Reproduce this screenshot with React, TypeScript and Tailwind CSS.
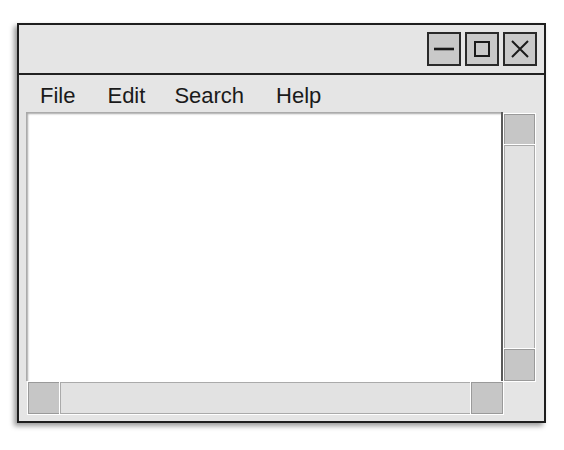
import React from 'react';

function TitleButton({ children }: { children: React.ReactNode }) {
  return (
    <div className="w-[34px] h-[34px] border-2 border-[#2a2a2a] bg-[#c9c9c9] flex items-center justify-center">
      {children}
    </div>
  );
}

function ScrollButton() {
  return <div className="w-full h-full bg-[#c6c6c6] border border-[#9a9a9a] outline outline-1 outline-white" />;
}

export default function App() {
  const menu = [
    { label: 'File', cls: 'ml-[21px]' },
    { label: 'Edit', cls: 'ml-[32px]' },
    { label: 'Search', cls: 'ml-[29px]' },
    { label: 'Help', cls: 'ml-[32px]' },
  ];

  return (
    <div className="w-[564px] h-[450px] bg-white pt-[23px] pl-[17px]" style={{ fontFamily: '"Liberation Sans", Arial, sans-serif' }}>
      <div className="w-[529px] h-[400px] border-2 border-[#1e1e1e] bg-[#e5e5e5] flex flex-col shadow-[-3px_3px_5px_rgba(0,0,0,0.4)]">
        {/* Title bar */}
        <div className="h-[50px] border-b-2 border-[#222] flex items-center justify-end gap-[4px] pr-[7px]">
          <TitleButton>
            <svg width="24" height="24" viewBox="0 0 24 24">
              <line x1="2" y1="12" x2="22" y2="12" stroke="#1a1a1a" strokeWidth="2.6" />
            </svg>
          </TitleButton>
          <TitleButton>
            <svg width="22" height="22" viewBox="0 0 22 22">
              <rect x="4" y="4" width="14" height="14" fill="none" stroke="#1a1a1a" strokeWidth="2" />
            </svg>
          </TitleButton>
          <TitleButton>
            <svg width="22" height="22" viewBox="0 0 22 22">
              <path d="M3 3 L19 19 M19 3 L3 19" stroke="#1a1a1a" strokeWidth="2" />
            </svg>
          </TitleButton>
        </div>

        {/* Menu bar */}
        <div className="h-[37px] flex items-center text-[22px] text-[#1a1a1a] pt-[4px]">
          {menu.map((m) => (
            <span key={m.label} className={m.cls}>
              {m.label}
            </span>
          ))}
        </div>

        {/* Body */}
        <div className="pl-[7px] grid grid-cols-[477px_33px] grid-rows-[269px_33px]">
          <div className="bg-white border-r-2 border-[#5a5a5a] shadow-[inset_2px_2px_2px_rgba(0,0,0,0.35)]" />
          <div className="flex flex-col pt-[2px] pl-[1px] pr-[1px]">
            <div className="h-[31px]">
              <ScrollButton />
            </div>
            <div className="flex-1 bg-[#e2e2e2] border border-[#aaa] outline outline-1 outline-white" />
            <div className="h-[32px]">
              <ScrollButton />
            </div>
          </div>
          <div className="flex pt-[1px] pl-[2px]">
            <div className="w-[32px] h-full">
              <ScrollButton />
            </div>
            <div className="flex-1 bg-[#e2e2e2] border border-[#aaa] outline outline-1 outline-white" />
            <div className="w-[32px] h-full">
              <ScrollButton />
            </div>
          </div>
          <div />
        </div>
      </div>
    </div>
  );
}
